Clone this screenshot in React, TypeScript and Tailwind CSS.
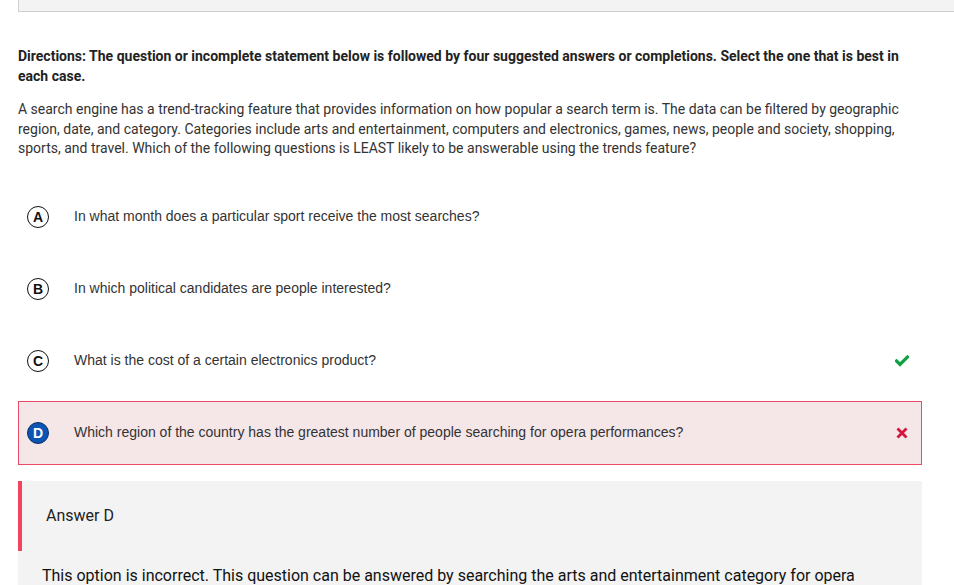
import React from "react";

function Letter({ l, selected }: { l: string; selected?: boolean }) {
  return selected ? (
    <div className="w-[22px] h-[22px] rounded-full bg-[#0b55b5] border-[1.5px] border-[#0a2f66] flex items-center justify-center text-white text-[14px] font-bold leading-none font-['Liberation_Sans',Arial,sans-serif] shrink-0">
      {l}
    </div>
  ) : (
    <div className="w-[22px] h-[22px] rounded-full border-[1.5px] border-[#111] flex items-center justify-center text-[#111] text-[14px] font-bold leading-none font-['Liberation_Sans',Arial,sans-serif] shrink-0">
      {l}
    </div>
  );
}

function Check() {
  return (
    <svg width="14" height="12" viewBox="0 0 14 12">
      <path d="M1.5 6 L5 9.5 L12.5 2" fill="none" stroke="#10a144" strokeWidth="3.2" strokeLinecap="square" />
    </svg>
  );
}

function Cross() {
  return (
    <svg width="12" height="12" viewBox="0 0 12 12">
      <path d="M1.5 1.5 L10.5 10.5 M10.5 1.5 L1.5 10.5" stroke="#d4143c" strokeWidth="2.8" />
    </svg>
  );
}

const options = [
  { l: "A", t: "In what month does a particular sport receive the most searches?" },
  { l: "B", t: "In which political candidates are people interested?" },
  { l: "C", t: "What is the cost of a certain electronics product?", correct: true },
  { l: "D", t: "Which region of the country has the greatest number of people searching for opera performances?", selected: true },
];

export default function App() {
  return (
    <div className="w-[954px] h-[585px] overflow-hidden bg-white relative">
      <div className="ml-[18px] h-[12px] bg-[#f3f3f3] border-l border-b border-[#cfcfcf]" />
      <div className="pl-[18px] w-[922px]">
        <p className="mt-[34px] text-[14px] leading-[20px] font-bold text-[#222] font-['Roboto',sans-serif]">
          Directions: The question or incomplete statement below is followed by four suggested answers or completions. Select the one that is best in each case.
        </p>
        <p className="mt-[14px] text-[14px] leading-[19.5px] text-[#333] font-['Roboto',sans-serif]">
          A search engine has a trend-tracking feature that provides information on how popular a search term is. The data can be filtered by geographic region, date, and category. Categories include arts and entertainment, computers and electronics, games, news, people and society, shopping, sports, and travel. Which of the following questions is LEAST likely to be answerable using the trends feature?
        </p>
        <div className="mt-[26px] flex flex-col gap-[8px]">
          {options.map((o) => (
            <div
              key={o.l}
              className={
                o.selected
                  ? "h-[64px] flex items-center pl-[8px] pr-[13px] border border-[#ea4a63] bg-[#f5e6e8]"
                  : "h-[64px] flex items-center pl-[8px] pr-[12px] border border-transparent"
              }
            >
              <Letter l={o.l} selected={o.selected} />
              <span className="ml-[25px] flex-1 text-[14px] text-[#333] font-['Liberation_Sans',Arial,sans-serif]">{o.t}</span>
              {o.correct && <Check />}
              {o.selected && <Cross />}
            </div>
          ))}
        </div>
        <div className="mt-[16px] bg-[#f3f3f3] pb-[20px]">
          <div className="h-[70px] border-l-4 border-[#f0445f] flex items-center pl-[24px]">
            <span className="text-[16px] text-[#222] font-['Roboto',sans-serif]">Answer D</span>
          </div>
          <p className="mt-[14px] pl-[24px] pr-[60px] text-[16px] leading-[22px] text-[#111] font-['Roboto',sans-serif]">
            This option is incorrect. This question can be answered by searching the arts and entertainment category for opera performances and viewing the geographic region data.
          </p>
        </div>
      </div>
    </div>
  );
}
